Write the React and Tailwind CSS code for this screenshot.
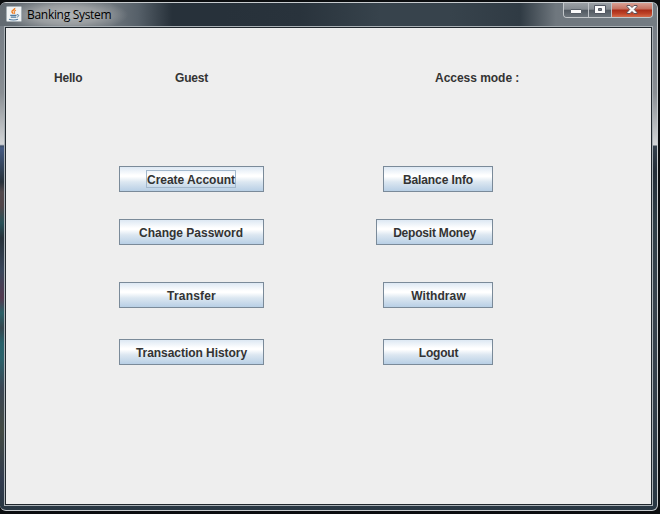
const FONT = 'font-["Liberation_Sans",Arial,sans-serif]';

function SwingButton({ children, className = '', labelClass = '', focused = false }) {
  return (
    <button
      className={`flex h-[26px] items-center justify-center border border-[#7a8a99] bg-[linear-gradient(180deg,#dde8f3_0%,#ffffff_34%,#ffffff_40%,#dce7f1_62%,#b8cfe5_100%)] text-[12px] leading-[16px] font-bold whitespace-nowrap text-[#333333] ${className}`}
    >
      <span className={`${labelClass} ${focused ? 'mr-px h-[18px] w-[90px] border border-[#a3b8cc] pt-px' : 'pt-px'}`}>
        {children}
      </span>
    </button>
  );
}

function JavaIcon() {
  return (
    <svg width="16" height="16" viewBox="0 0 16 16" className="block shrink-0">
      <rect x="0.5" y="0.5" width="15" height="15" rx="1" fill="#f0f2f3" stroke="#a6b0b6" />
      <path d="M8.700 2C9.200 4 5.400 4.300 6 6c.3.700 1.100 1 1.300 1.800" fill="none" stroke="#ef7c20" strokeWidth="1.500" />
      <path d="M10 4.200C8 4.900 8 5.700 8.500 6.300c.4.600.2 1-.3 1.500" fill="none" stroke="#ef8b38" strokeWidth="1.200" />
      <path d="M4.200 9.400h6.300M4.800 11.200h5.200M3 13.300c2 .9 7 .9 9 0" fill="none" stroke="#507b9e" strokeWidth="1.200" />
      <path d="M10.800 8.700c2.700-.5 2.500 2-.2 2.500" fill="none" stroke="#507b9e" />
    </svg>
  );
}

function WindowControls() {
  return (
    <div className="flex h-[15px] w-[90px] overflow-hidden rounded-b-[4px] border border-t-0 border-[#c3c7ca]">
      <div className="flex w-[25px] items-center justify-center border-r border-[#bfc3c7] bg-[linear-gradient(180deg,#9ba0a5_0%,#858b91_45%,#515961_50%,#6d757c_100%)]">
        <svg width="12" height="12" viewBox="0 0 12 12">
          <rect x="0.5" y="5.5" width="11" height="4" rx="0.5" fill="#fafafa" stroke="#596069" />
        </svg>
      </div>
      <div className="flex w-[23px] items-center justify-center border-r border-[#bfc3c7] bg-[linear-gradient(180deg,#9ba0a5_0%,#858b91_45%,#515961_50%,#6d757c_100%)]">
        <svg width="12" height="10" viewBox="0 0 12 10">
          <path fillRule="evenodd" d="M.5.5h11v8H.5zM4.500 3.500v2h3v-2z" fill="#fafafa" stroke="#535863" />
        </svg>
      </div>
      <div className="flex flex-1 items-center justify-center bg-[linear-gradient(180deg,#d8a094_0%,#c4705f_43%,#a92c18_50%,#bd4227_75%,#d46a49_100%)] pr-px">
        <svg width="12" height="10" viewBox="0 0 12 10">
          <path d="M1 .5h3l2 2 2-2h3v1L8.300 4.500 11 7.500v1H8l-2-2-2 2H1v-1l2.700-3L1 1.500z" fill="#fafafa" stroke="#59505a" />
        </svg>
      </div>
    </div>
  );
}

export default function App() {
  return (
    <div className={`h-[514px] w-[660px] overflow-hidden bg-[#0c0e10] pt-[2px] ${FONT}`}>
      <div className="flex h-[509px] w-[658px] flex-col rounded-[6px] border border-l-0 border-[#c8cccf] bg-[linear-gradient(180deg,#737b83_0px,#7d838a_50px,#8a8f94_90px,#d4d6d8_142px,#34404c_143px,#242e38_168px,#303f48_220px,#39444e_300px,#34404b_400px,#293743_509px)]">
        <header className="flex h-[23px] shrink-0 justify-between rounded-t-[5px] bg-[radial-gradient(ellipse_62px_17px_at_66px_12px,#b2b5b6_0%,#a5a8aacc_55%,#8a909400_100%),linear-gradient(90deg,#636b72_0px,#6d757c_110px,#566069_138px,#27313a_172px,#27313a_225px,#29333c_300px,#37434c_380px,#37434c_450px,#303b44_520px,#6f777e_556px,#747c83_658px)]">
          <div className="flex pt-[3px] pl-[6px]">
            <JavaIcon />
            <span className='pl-[5px] font-["Open_Sans","Noto_Sans",sans-serif] text-[12px] leading-[17px] tracking-[-0.3px] whitespace-nowrap text-black'>
              Banking System
            </span>
          </div>
          <div className="pr-[4px]">
            <WindowControls />
          </div>
        </header>
        <div className="flex">
          <div className="h-[480px] w-[4px] bg-[linear-gradient(180deg,transparent_118px,#455a82_122px,#34455c_140px,#27313a_156px,#51494c_166px,#514549_180px,#285158_197px,#27313a_212px,#39465a_245px,#53394f_272px,#2a6067_287px,#35454e_302px,#28616a_317px,#2b626b_332px,#3b4654_362px,#434a43_405px,#313b4e_455px,#293743_480px)]" />
          <div className="h-[480px] w-[649px] border border-[#a9b0b5]">
            <main className="h-full w-full border border-[#20272d] bg-[#eeeeee] text-[12px] font-bold text-[#333333]">
              <div className="flex pt-[42px] pl-[48px] leading-[16px] whitespace-nowrap">
                <span className="w-[121px] tracking-[-0.2px]">Hello</span>
                <span className="w-[260px] tracking-[-0.2px]">Guest</span>
                <span className="tracking-[-0.03px]">Access mode :</span>
              </div>
              <div className="flex w-[487px] justify-between pt-[80px] pl-[113px]">
                <div className="flex w-[145px] flex-col">
                  <SwingButton focused labelClass="tracking-[-0.02px]">Create Account</SwingButton>
                  <SwingButton className="mt-[27px]" labelClass="-ml-px">Change Password</SwingButton>
                  <SwingButton className="mt-[37px]" labelClass="tracking-[0.2px]">Transfer</SwingButton>
                  <SwingButton className="mt-[31px]" labelClass="tracking-[-0.05px]">Transaction History</SwingButton>
                </div>
                <div className="flex flex-col items-end">
                  <SwingButton className="w-[110px]" labelClass="tracking-[-0.1px]">Balance Info</SwingButton>
                  <SwingButton className="mt-[27px] w-[117px]" labelClass="tracking-[-0.2px]">Deposit Money</SwingButton>
                  <SwingButton className="mt-[37px] w-[110px]" labelClass="pl-px tracking-[0.1px]">Withdraw</SwingButton>
                  <SwingButton className="mt-[31px] w-[110px]" labelClass="pl-px tracking-[-0.2px]">Logout</SwingButton>
                </div>
              </div>
            </main>
          </div>
        </div>
      </div>
    </div>
  );
}
